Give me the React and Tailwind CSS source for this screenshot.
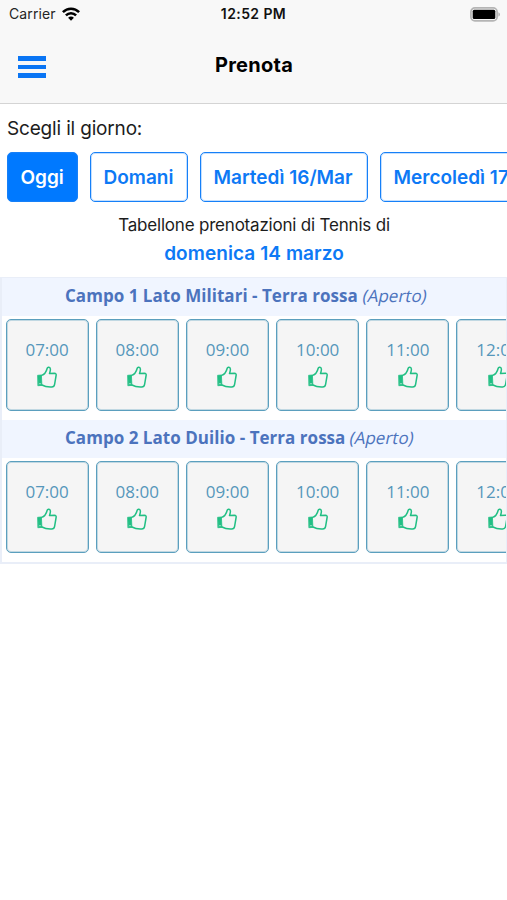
import React, { useState } from 'react'

const days = [
  { label: 'Oggi', width: 'w-[71px]' },
  { label: 'Domani', width: 'w-[98px]' },
  { label: 'Martedì 16/Mar', width: 'w-[168px]' },
  { label: 'Mercoledì 17/Mar', width: 'w-[190px]' },
]

const hours = ['07:00', '08:00', '09:00', '10:00', '11:00', '12:00']

const courts = [
  { id: 1, name: 'Campo 1 Lato Militari - Terra rossa', status: 'Aperto' },
  { id: 2, name: 'Campo 2 Lato Duilio - Terra rossa', status: 'Aperto' },
]

const WifiIcon = () => (
  <svg width="18" height="14" viewBox="0 0 18 14" fill="none" stroke="#000" strokeWidth="2.5">
    <path d="M0.9 5.2C5.4 0.6 12.6 0.6 17.1 5.2" />
    <path d="M3.9 8.4C6.7 5.5 11.3 5.5 14.1 8.4" />
    <path d="M9 13.8L6.1 10.7C7.7 9.2 10.3 9.2 11.9 10.7Z" fill="#000" stroke="none" />
  </svg>
)

const BatteryIcon = () => (
  <svg width="31" height="15" viewBox="0 0 31 15">
    <rect x="0.9" y="0.9" width="26.2" height="13" rx="4" fill="#f7f7f7" stroke="#b5b5b5" strokeWidth="1.7" />
    <rect x="2.7" y="2.8" width="22.6" height="9.2" rx="1.5" fill="#000" />
    <path d="M28.4 5.2C30.5 6 30.5 8.8 28.4 9.6Z" fill="#b5b5b5" />
  </svg>
)

const ThumbIcon = () => (
  <svg width="20" height="22" viewBox="0 0 20 22" fill="none" stroke="#22bf84" strokeWidth="1.5" strokeLinejoin="round" strokeLinecap="round">
    <path d="M0.9 9.3L4.4 9L4.9 19.4L1.2 19.7Z" fill="#22bf84" strokeWidth="0.8" />
    <path d="M4.6 9.4C8.2 8.2 9.4 5.4 10.2 2.2C10.6 0.7 13.2 0.9 13.4 3C13.5 4.7 12.9 6.2 12.5 7.5L17.4 7.2C18.8 7.2 19.4 8.2 19.1 9.5L17.6 18.3C17.3 20 16.4 20.9 14.7 21C11 21.2 8 20.8 5 19" />
    <circle cx="3" cy="17.7" r="0.6" fill="#f5f5f5" stroke="none" />
  </svg>
)

const Header = () => (
  <header className="h-[104px] bg-[#f8f8f8] border-b border-[#d4d4d4]">
    <div className="grid grid-cols-3 items-center h-7 pl-[9px] pr-1.5">
      <div className="flex items-center gap-1.5 text-sm tracking-[0.1px] text-[#252525]">
        Carrier <WifiIcon />
      </div>
      <div className="text-center text-sm font-semibold tracking-[0.4px] whitespace-nowrap -ml-[3px] text-[#111]">12:52 PM</div>
      <div className="flex justify-end"><BatteryIcon /></div>
    </div>
    <div className="grid grid-cols-3 items-center h-[74px]">
      <button aria-label="Menu" className="flex flex-col gap-1 ml-[17.5px] mt-1 w-7">
        <span className="h-[4.5px] w-7 bg-[#0a75f4]" />
        <span className="h-[4.5px] w-7 bg-[#0a75f4]" />
        <span className="h-[4.5px] w-7 bg-[#0a75f4]" />
      </button>
      <h1 className="text-center text-xl font-bold tracking-[0.25px] pl-px text-black">Prenota</h1>
    </div>
  </header>
)

const Court = ({ court }) => (
  <section>
    <h2 className="h-[38px] bg-[#f0f5ff] pl-[63px] pb-[3px] flex items-center gap-[5px] whitespace-nowrap text-[17px] text-[#4c73bd]">
      <span className="font-bold tracking-[0.03px]">{court.name}</span>
      <span className="-skew-x-12">({court.status})</span>
    </h2>
    <div className="flex gap-[7px] pl-[3.5px] pt-[3px] pb-[9px] overflow-hidden">
      {hours.map((hour) => (
        <button
          key={hour}
          className="shrink-0 w-[83.2px] h-[92px] flex flex-col items-center pt-[17px] rounded-[5px] border border-[#5b9fbe] shadow-[inset_0_0_0_1px_#5b9fbe55] bg-[#f5f5f5] text-[17px] text-[#5697bb]"
        >
          <span className="leading-[26px]">{hour}</span>
          <span className="mt-[3px]"><ThumbIcon /></span>
        </button>
      ))}
    </div>
  </section>
)

const App = () => {
  const [selected, setSelected] = useState('Oggi')

  return (
    <div className="w-full min-h-screen bg-white overflow-hidden font-['Inter',sans-serif]">
      <Header />

      <main>
        {/* Day selection */}
        <p className="pl-[7px] pt-[11px] text-[19px] leading-7 tracking-[-0.17px] text-[#1c1c1c]">Scegli il giorno:</p>
        <div className="flex gap-3 pl-[7px] pt-[9px] overflow-hidden">
          {days.map((day) => (
            <button
              key={day.label}
              onClick={() => setSelected(day.label)}
              className={`shrink-0 h-[50px] pl-[12.5px] pt-0.5 text-left rounded-[5px] border text-[19px] font-semibold whitespace-nowrap border-[#1680f8] shadow-[inset_0_0_0_1px_#1680f840] ${day.width} ${
                selected === day.label ? 'bg-[#0079ff] text-white' : 'bg-white text-[#0d79f5]'
              }`}
            >
              {day.label}
            </button>
          ))}
        </div>

        <div className="text-center pt-2.5 pb-[9px] pl-px">
          <p className="text-[17px] leading-[26px] tracking-[-0.2px] text-[#1c1c1c]">Tabellone prenotazioni di Tennis di</p>
          <p className="pt-px text-[19px] leading-[30px] tracking-[0.08px] font-semibold text-[#0d79f5]">domenica 14 marzo</p>
        </div>

        {/* Courts table */}
        <div className="border-2 border-t-1 border-r-1 border-[#e9eef8] h-[287px] -mt-px font-['Open_Sans',sans-serif]">
          {courts.map((court) => (
            <Court key={court.id} court={court} />
          ))}
        </div>
      </main>
    </div>
  )
}

export default App
